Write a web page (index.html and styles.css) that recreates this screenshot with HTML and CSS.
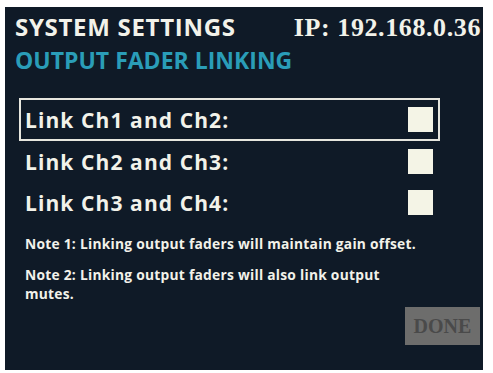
FILE: index.html
```html
<!DOCTYPE html>
<html>
<head>
<meta charset="utf-8">
<link rel="stylesheet" href="styles.css">
</head>
<body>
<div class="panel">
  <div class="header">
    <div class="title">SYSTEM SETTINGS</div>
    <div class="ip">IP: 192.168.0.36</div>
  </div>
  <div class="subtitle">OUTPUT FADER LINKING</div>
  <div class="rows">
    <div class="row selected"><span class="label">Link Ch1 and Ch2:</span><span class="check"></span></div>
    <div class="row"><span class="label">Link Ch2 and Ch3:</span><span class="check"></span></div>
    <div class="row"><span class="label">Link Ch3 and Ch4:</span><span class="check"></span></div>
  </div>
  <div class="notes">
    <p class="note">Note 1: Linking output faders will maintain gain offset.</p>
    <p class="note">Note 2: Linking output faders will also link output<br>mutes.</p>
  </div>
  <div class="footer">
    <div class="done">DONE</div>
  </div>
</div>
</body>
</html>
```
FILE: styles.css
```css
html, body {
  margin: 0;
  padding: 0;
  background: #ffffff;
}
body {
  width: 493px;
  height: 373px;
  overflow: hidden;
}
.panel {
  margin: 7px 0 0 5px;
  width: 478px;
  height: 363px;
  box-sizing: border-box;
  background: #0f1a27;
  padding: 6px 3px 0 10px;
  display: flex;
  flex-direction: column;
  font-family: "Open Sans", "DejaVu Sans", sans-serif;
  color: #f2f2ea;
}
.header {
  display: flex;
  justify-content: space-between;
  align-items: baseline;
  height: 28px;
}
.title {
  font-weight: 700;
  font-size: 24px;
  letter-spacing: 0.7px;
  line-height: 28px;
}
.ip {
  font-family: "Liberation Serif", serif;
  font-weight: 700;
  font-size: 26px;
  letter-spacing: 0.6px;
  line-height: 28px;
  margin-right: -1px;
}
.subtitle {
  margin-top: 7px;
  color: #2a9db8;
  font-weight: 700;
  font-size: 23px;
  line-height: 24px;
}
.rows {
  margin-top: 26px;
  margin-left: 4px;
  width: 421px;
  display: flex;
  flex-direction: column;
}
.row {
  display: flex;
  justify-content: space-between;
  align-items: center;
  height: 41px;
  padding: 0 5px 0 4px;
  border: 2px solid transparent;
  box-sizing: border-box;
}
.row.selected {
  height: 43px;
  border-color: #e6e6de;
}
.label {
  font-size: 21px;
  font-weight: 700;
  letter-spacing: 1.1px;
}
.check {
  width: 25px;
  height: 25px;
  background: #f4f4e6;
}
.notes {
  margin-top: 11px;
  margin-left: 10px;
}
.note {
  margin: 0 0 12px 0;
  font-size: 13.8px;
  font-weight: 700;
  letter-spacing: 0.25px;
  line-height: 19px;
}
.note:last-child {
  margin-bottom: 0;
}
.footer {
  display: flex;
  justify-content: flex-end;
  margin-top: 4px;
}
.done {
  width: 75px;
  height: 38px;
  background: #6d6d6c;
  color: #4a4a4a;
  font-family: "Liberation Serif", serif;
  font-weight: 700;
  font-size: 20px;
  display: flex;
  align-items: center;
  justify-content: center;
}
```
